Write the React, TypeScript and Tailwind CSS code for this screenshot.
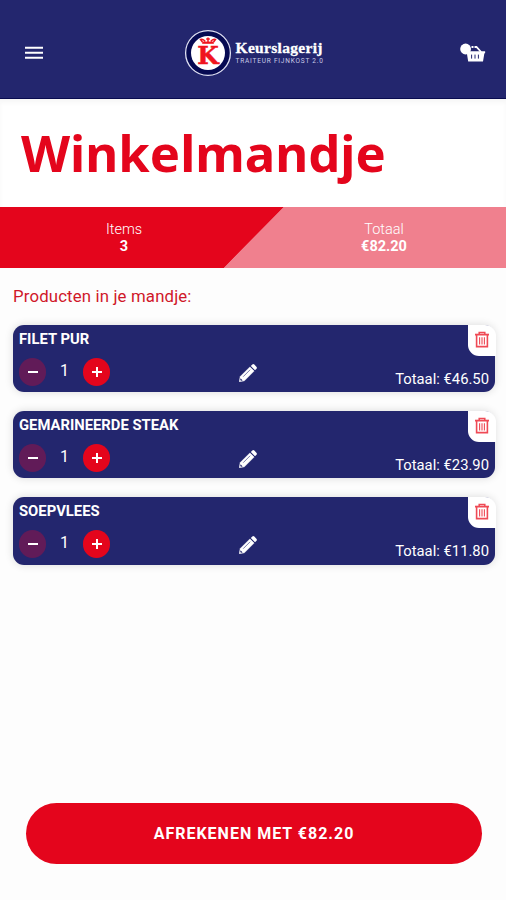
import { useState } from 'react'

interface Product {
    id: number
    name: string
    quantity: number
    total: string
}

const products: Product[] = [
    { id: 1, name: 'FILET PUR', quantity: 1, total: '46.50' },
    { id: 2, name: 'GEMARINEERDE STEAK', quantity: 1, total: '23.90' },
    { id: 3, name: 'SOEPVLEES', quantity: 1, total: '11.80' },
]

function MenuIcon() {
    return (
        <svg className="w-[18px] h-[14px]" viewBox="0 0 18 14" fill="#fff">
            <path d="M0 .8h18v2H0zM0 5.8h18v2H0zM0 10.8h18v2H0z" />
        </svg>
    )
}

function Logo() {
    return (
        <div className="flex items-center ml-[6px]">
            <svg className="w-[48px] h-[48px]" viewBox="0 0 48 48">
                <circle cx="24" cy="24" r="22.4" fill="#060a52" stroke="#dfe0f2" strokeWidth="1.3" />
                <circle cx="24" cy="24" r="17" fill="#fff" />
                {/* Crown */}
                <path
                    d="M18.4 13l-1.8-2.5q2.6-1 4.6 2M29.6 13l1.8-2.5q-2.6-1-4.6 2M24 13V8.6M22.2 10h3.6"
                    fill="none"
                    stroke="#f0141e"
                    strokeWidth="1.5"
                />
                <path d="M18.2 12.6h11.6v2.2H18.2z" fill="#f0141e" />
                <text
                    x="24"
                    y="35"
                    textAnchor="middle"
                    fontSize="24.5"
                    fontWeight="700"
                    fill="#f0141e"
                    stroke="#f0141e"
                    strokeWidth=".5"
                    textLength="21.5"
                    lengthAdjust="spacingAndGlyphs"
                    className="font-['DejaVu_Serif',serif]"
                >
                    K
                </text>
            </svg>
            <div className="ml-[4px] w-[90px] -mt-[2px] text-white whitespace-nowrap">
                <div className="font-['Liberation_Serif',serif] font-bold text-[15.5px] leading-[18px] tracking-[0.32px] [-webkit-text-stroke:0.3px_#fff]">
                    Keurslagerij
                </div>
                <div className="text-[6.5px] leading-[8px] tracking-[0.8px] text-[#c9cae6]">TRAITEUR FIJNKOST 2.0</div>
            </div>
        </div>
    )
}

function BasketIcon() {
    return (
        <svg className="w-[26px] h-[20px]" viewBox="0 0 26 20">
            <path d="M11.5 4h5l4.6 5" fill="none" stroke="#fff" strokeWidth="1.8" strokeDasharray="2 1 20" />
            <path d="M8.5 8.2h16.6q.6 1.6-.8 2.6L23 18.4H8.2L7 11.2z" fill="#fff" />
            <path d="M11.6 11.6v4M15 11.6v4M18.4 11.6v4" stroke="#23266e" strokeWidth="1" />
            <circle cx="5.6" cy="6" r="5.4" fill="#fff" />
        </svg>
    )
}

function PencilIcon() {
    return (
        <svg className="w-[18px] h-[18px]" viewBox="0 0 18 18">
            <path d="M0.2 17.8l1-5.2L10.9 2.9l4.2 4.2-9.7 9.7z" fill="#fff" stroke="#fff" strokeWidth=".5" />
            <path d="M11.8 2l1.5-1.5q1-.8 2 .1l2.1 2.1q.9 1 .1 2L16 6.2z" fill="#fff" />
            <path d="M4.2 12.7l7-7" stroke="#23266e" strokeWidth=".6" />
            <path d="M1.5 14.3l2.2 2.2-1.6.3-.9-.9z" fill="#23266e" />
        </svg>
    )
}

function TrashIcon() {
    return (
        <svg className="w-[14px] h-[17px]" viewBox="0 0 14 17" fill="none" stroke="#ef4a55">
            <path d="M0 3.6h14" strokeWidth="1.8" />
            <path d="M4.2 3.5V1.5h5.6v2" strokeWidth="1.5" />
            <path d="M1.6 4v11.6h10.8V4" strokeWidth="1.6" />
            <path d="M4.6 6.2v7.2M7 6.2v7.2M9.4 6.2v7.2" strokeWidth="1.1" />
        </svg>
    )
}

function ProductCard({ product }: { product: Product }) {
    const [quantity, setQuantity] = useState(product.quantity)

    return (
        <div className="relative flex flex-col h-[67.5px] rounded-[11px] bg-[#23266e] text-white shadow-[0_0_9px_rgba(0,0,0,0.14)]">
            <h2 className="pl-[6px] pt-[5px] text-[14.8px] leading-[19px] font-bold">{product.name}</h2>
            <div className="flex items-start pl-[6px] pt-[9px]">
                <button
                    onClick={() => setQuantity(Math.max(1, quantity - 1))}
                    className="w-[27px] h-[28px] rounded-full bg-[#611b58] flex items-center justify-center"
                >
                    <span className="w-[10px] h-[2px] bg-white" />
                </button>
                <span className="w-[37px] text-center text-base leading-[26px]">{quantity}</span>
                <button
                    onClick={() => setQuantity(quantity + 1)}
                    className="w-[27px] h-[28px] rounded-full bg-[#e4051c] flex items-center justify-center"
                >
                    <svg className="w-[10px] h-[10px]" viewBox="0 0 10 10" stroke="#fff" strokeWidth="2">
                        <path d="M0 5h10M5 0v10" />
                    </svg>
                </button>
                <button className="ml-[129px] mt-[6px]">
                    <PencilIcon />
                </button>
                <span className="ml-auto mr-[6px] mt-[12px] text-[14.8px] leading-[18px]">Totaal: €{product.total}</span>
            </div>
            <button className="absolute top-0 -right-px w-[28px] h-[31px] bg-white rounded-tr-[11px] rounded-bl-[11px] flex items-start justify-center pt-[6px]">
                <TrashIcon />
            </button>
        </div>
    )
}

export default function App() {
    return (
        <div className="w-full h-[900px] flex flex-col bg-[#fdfdfd] font-[Roboto,sans-serif] overflow-hidden">
            {/* Header */}
            <header className="h-[99px] shrink-0 bg-[#23266e] border-b border-[#090c50] flex items-center justify-between pl-[25px] pr-[20px] pt-[7px]">
                <MenuIcon />
                <Logo />
                <BasketIcon />
            </header>

            <div className="h-[108px] shrink-0 bg-white shadow-[inset_0_4px_4px_rgba(0,0,0,0.03)] pl-[21px] pt-[19px]">
                <h1 className="font-['Noto_Sans','Open_Sans',sans-serif] font-bold text-[50.8px] leading-[70px] text-[#e4051c]">
                    Winkelmandje
                </h1>
            </div>

            {/* Summary */}
            <div className="h-[61px] shrink-0 flex text-white text-center text-[14.5px] leading-[17px] bg-[linear-gradient(134.5deg,#e4051c_50%,#f0808e_50.2%)]">
                <div className="w-[248px] pt-[14px]">
                    <p className="font-light">Items</p>
                    <p className="font-bold">3</p>
                </div>
                <div className="flex-1 pl-[14px] pt-[14px]">
                    <p className="font-light">Totaal</p>
                    <p className="font-bold">€82.20</p>
                </div>
            </div>

            <main className="flex-1 pl-[13px] pr-[11px] pt-[18px]">
                <p className="text-[16.8px] leading-[20px] tracking-[0.15px] text-[#d01729]">Producten in je mandje:</p>
                <div className="mt-[18.7px] flex flex-col gap-[18.8px]">
                    {products.map((product) => (
                        <ProductCard key={product.id} product={product} />
                    ))}
                </div>
            </main>

            <footer className="flex justify-center pl-[2px] pb-[36px]">
                <button className="w-[456px] h-[61px] rounded-full bg-[#e4051c] text-white font-bold text-base tracking-[1px]">
                    AFREKENEN MET €82.20
                </button>
            </footer>
        </div>
    )
}
